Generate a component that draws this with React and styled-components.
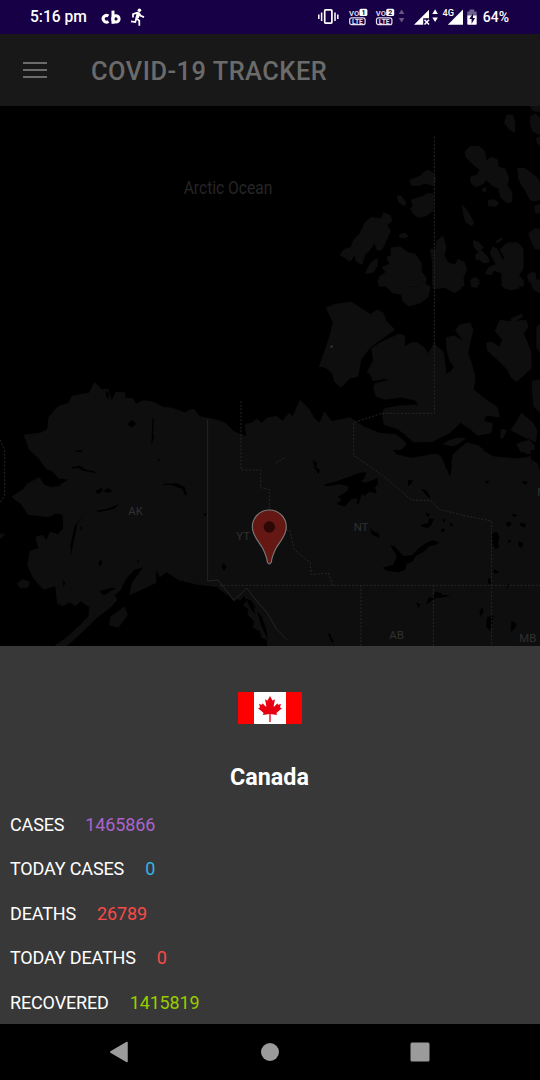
import React from "react";
import styled, { createGlobalStyle } from "styled-components";

const GlobalStyle = createGlobalStyle`
  * { box-sizing: border-box; }
  body { margin: 0; background: #000; font-family: Roboto, "Liberation Sans", sans-serif; }
`;

const Screen = styled.div`
  width: 540px;
  height: 1080px;
  display: flex;
  flex-direction: column;
  overflow: hidden;
  background: #000;
`;

const StatusBar = styled.header`
  flex: none;
  height: 34px;
  padding: 0 31px 0 30px;
  display: flex;
  align-items: center;
  justify-content: space-between;
  background: #170045;
  color: #fff;
`;

const StatusGroup = styled.div`
  display: flex;
  align-items: center;
  gap: ${(p) => p.$gap}px;
  height: 34px;
`;

const StatusText = styled.span`
  font-size: ${(p) => p.$size}px;
  font-weight: 500;
  line-height: 34px;
  white-space: nowrap;
`;

const StatusIcons = styled.svg`
  display: block;
  flex: none;
`;

const AppBar = styled.div`
  flex: none;
  height: 72px;
  padding: 0 23px;
  display: flex;
  align-items: center;
  gap: 44px;
  background: #181818;
  color: #6b6b6b;
`;

const Burger = styled.div`
  width: 24px;
  height: 16px;
  display: flex;
  flex-direction: column;
  justify-content: space-between;
`;

const BurgerLine = styled.span`
  height: 2px;
  background: #6b6b6b;
`;

const Title = styled.h1`
  margin: 1px 0 0;
  font-size: 25.4px;
  font-weight: 500;
  line-height: 30px;
  letter-spacing: 0.5px;
  white-space: nowrap;
`;

const MapSvg = styled.svg`
  display: block;
  flex: none;
  width: 540px;
  height: 540px;
  font-family: Roboto, sans-serif;
`;

const Sheet = styled.section`
  flex: none;
  height: 378px;
  padding-top: 46px;
  display: flex;
  flex-direction: column;
  background: #383838;
  color: #fff;
`;

const Flag = styled.svg`
  display: block;
  flex: none;
  align-self: center;
`;

const Country = styled.h2`
  margin: 39px 0 0;
  font-size: 23.3px;
  line-height: 28px;
  font-weight: 700;
  text-align: center;
  padding-right: 1px;
`;

const Stats = styled.dl`
  margin: 11px 0 0;
  padding: 0 10px;
`;

const StatRow = styled.div`
  height: 44.5px;
  display: flex;
  align-items: center;
  gap: 21px;
  font-size: 18px;
  letter-spacing: -0.15px;
`;

const StatLabel = styled.dt`
  white-space: nowrap;
`;

const StatValue = styled.dd`
  margin: 0;
  color: ${(p) => p.$color};
`;

const NavBar = styled.nav`
  flex: none;
  height: 56px;
  padding: 0 110px 0 109px;
  display: flex;
  align-items: center;
  justify-content: space-between;
  background: #000;
`;

const Water = styled.g`
  fill: #000;
  stroke: none;
`;

const Border = styled.path`
  fill: none;
  stroke: ${(p) => (p.$solid ? "#242424" : "#272727")};
  stroke-width: 3;
  stroke-dasharray: ${(p) => (p.$solid ? "none" : "6 5")};
`;

const Place = styled.text`
  fill: ${(p) => p.$color || "#303030"};
  font-size: ${(p) => p.$size || 34}px;
`;

const stats = [
  { label: "CASES", value: "1465866", color: "#a964cd" },
  { label: "TODAY CASES", value: "0", color: "#33b5e5" },
  { label: "DEATHS", value: "26789", color: "#fa4949" },
  { label: "TODAY DEATHS", value: "0", color: "#fa4949" },
  { label: "RECOVERED", value: "1415819", color: "#99cc00" },
];

function LeftIcons() {
  return (
    <StatusIcons width="46" height="34" viewBox="100 0 46 34">
      <g fill="none" stroke="#fff" strokeWidth="3">
        <path d="M108.4 16.1A3.3 3.3 0 1 0 108.4 21.5" />
        <path d="M113 10.6V23.8" />
        <circle cx="115.9" cy="18.9" r="3.2" />
      </g>
      <circle cx="139.4" cy="10.3" r="1.8" fill="#fff" />
      <path
        d="M133 17.5V14.2L137.2 12.7L139.1 13.3L140.7 15.7L144 17.1M137.6 13L136.2 18.2L139.3 20.7V25.7M136.3 18.5L135.3 22.1L131 21.4M139.2 14L138 18"
        fill="none"
        stroke="#fff"
        strokeWidth="1.75"
      />
    </StatusIcons>
  );
}

function VolteIcon({ x, sim }) {
  return (
    <g transform={`translate(${x} 0)`}>
      <text x="0" y="16.1" fontSize="8" fontWeight="700" fill="#ddd6e8" textLength="10.2" lengthAdjust="spacingAndGlyphs">VO</text>
      <rect x="10.4" y="8.8" width="8" height="7.3" rx="1.6" fill="#fff" />
      <text x="12.5" y="15.2" fontSize="7" fontWeight="700" fill="#170045">{sim}</text>
      <rect x="0.7" y="17.8" width="15.4" height="6.9" rx="2" fill="none" stroke="#e6e0ee" strokeWidth="1.2" />
      <text x="3" y="23.8" fontSize="6.4" fontWeight="700" fill="#e6e0ee" textLength="10.8" lengthAdjust="spacingAndGlyphs">LTE</text>
    </g>
  );
}

function RightIcons() {
  return (
    <StatusIcons width="165" height="34" viewBox="316 0 165 34" fontFamily="Roboto, sans-serif">
      <rect x="324.7" y="9.9" width="7.2" height="13.2" rx="0.8" fill="none" stroke="#fff" strokeWidth="1.7" />
      <path d="M321.6 12.5V21M318.8 14.5V19M335 12.5V21M337.8 14.5V19" stroke="#fff" strokeWidth="1.5" />
      <VolteIcon x={349} sim="1" />
      <VolteIcon x={375.8} sim="2" />
      <path d="M398.8 14L401.6 9.5L404.4 14ZM398.8 18L401.6 22.5L404.4 18Z" fill="#675982" />
      <path d="M414 24.8L429 9.7V18.2H423.2V24.8Z" fill="#fff" />
      <path d="M424.5 19.7L429 24.4M429 19.7L424.5 24.4" stroke="#fff" strokeWidth="1.5" />
      <path d="M432.3 14L435.1 9.3L437.9 14ZM432.3 17.4L435.1 22L437.9 17.4Z" fill="#fff" />
      <text x="442.5" y="15.5" fontSize="9.8" fontWeight="500" fill="#fff" textLength="11.5" lengthAdjust="spacingAndGlyphs">4G</text>
      <path d="M447.8 24.8L463 9.6V24.8Z" fill="#fff" />
      <path d="M467.3 16V11.5H469.5V9.6H474.3V11.5H476.7V16Z" fill="#6e608c" />
      <path d="M467.3 15.5H476.7V24Q476.7 24.8 475.9 24.8H468.1Q467.3 24.8 467.3 24Z" fill="#fff" />
      <path d="M473.2 13.2L469.3 19.1H471.6V23.7L475.1 17.9H472.9Z" fill="#170045" />
    </StatusIcons>
  );
}

function ArcticIslands() {
  return (
    <>
      <g transform="translate(900 0)">
        <path d="M620 28L638 27L645 52L643 79L628 70L614 52ZM690 0H720V18L698 13ZM692 32L707 24L720 36V85L700 78L691 55ZM710 96L720 92V120L712 111Z" />
        <path d="M495 137L510 122L535 121L553 134L559 165L575 154L592 161L595 183L614 188L626 216L621 239L635 258L636 287L622 290L603 276L596 247L576 238L559 221L548 235L525 242L512 228L513 211L531 209L540 191L523 178L498 153ZM653 186L675 188L710 213L720 228V280L705 285L690 281L677 254L663 235L656 216ZM548 247L558 246L557 257L549 256ZM564 284L583 281L596 290L588 301L566 299Z" />
        <path d="M330 222L360 211L379 193L398 199L408 219L401 239L375 231L354 239L334 237ZM334 282L368 272L381 263L401 264V313L379 329L355 334L340 323L332 307L340 300ZM291 269L303 270L318 290L313 299L297 289ZM298 386L316 382L324 390L314 396L300 394Z" />
        <path d="M121 446L132 431L153 424L162 401L180 382L197 348L213 335L246 338L251 320L271 329L275 345L261 357L271 376L262 396L245 432H231L224 408L205 438L195 442L186 475L168 465L165 446L150 466ZM213 470L231 458L232 479L218 500L196 501ZM487 298L501 313L522 352L514 359L497 347L491 323Z" />
        <path d="M273 426L300 423L325 440L346 445L364 472V498L379 516L374 540H236L238 512L259 498L246 484L269 475L261 454L274 448ZM410 405L429 391L438 425L432 449L445 471L466 477L474 460L492 468L500 490L489 518L492 540H398V470L391 430L408 432ZM520 404L535 408L550 425L542 432L562 451L568 468L548 470L540 461L530 462L526 447L538 441L523 424ZM578 423L592 430L609 464L615 455L600 430L623 411L654 410L669 428V488L656 508L670 523V540H606V502L582 492L575 506L556 503L568 483L588 476L571 442ZM704 301L720 295V321H706ZM686 383L704 367L720 370V430L704 428ZM516 518L528 514L539 532L531 540H516ZM682 508L696 499L707 502L706 524L689 530ZM589 405L606 395L604 402L591 411Z" />
      </g>
      <g transform="translate(900 522)">
        <path d="M234 0H314L317 20L350 22L371 11L391 20L383 52L359 69L327 78L309 64L305 43L279 38L252 14L238 17ZM398 0H490L481 28L462 38L435 22L400 27ZM512 0H537L531 22L515 20ZM607 0H664L655 25L635 30L612 24ZM692 0H720V40L700 28Z" />
        <path d="M79 83L103 74L154 66L184 86L211 103L231 90L249 98L257 121L283 149L249 174L212 200L183 237L173 289L149 295L122 322L104 305L98 280L76 262L58 259L73 219L89 171L100 128Z" />
        <path d="M215 205L246 186L298 162L314 168L313 202L330 190L348 187L370 201L386 221L402 191L430 217L438 282L452 276L463 260L450 244L441 208L439 173L462 168L491 184L467 151L477 136L510 128L519 150L510 185L503 220L515 252L525 293L520 328L547 351L591 382L598 411L558 405L550 424L577 430L573 458L532 466L512 448L482 427L448 459L398 484L340 486L315 463L294 447L253 433L247 402L253 386L297 378L358 375L345 360L306 351L257 358L230 350L221 327L225 311L276 298L250 296L220 302L210 279L202 277L221 240Z" />
        <path d="M586 153L600 121L632 125L678 121L684 140L670 160L685 197L693 218L693 266L669 287L649 305L633 291L623 269L601 246L562 211L560 188L577 187L598 202L608 180ZM633 117L665 102L667 110L638 126ZM633 450L651 425L664 400L696 426L711 451L707 485L675 472ZM696 304L720 299V398L701 379ZM711 140L720 133V216L711 205ZM604 448L619 451L608 475L602 472ZM651 492L687 481L704 497L699 522L664 519ZM431 492L447 482L475 474L496 475L478 489L460 498Z" />
      </g>
    </>
  );
}

function Mainland() {
  return (
    <g transform="translate(0 792)">
      <path d="M165 828L206 798L238 769L267 738L269 711L241 692L228 707L207 695L188 707L173 700L167 647L130 658L98 620L83 584L90 544L116 535L108 502L127 496L139 512L151 487L174 494L191 475L189 433L168 429L145 440L85 433L64 402L36 381L70 358L83 341L118 323L131 344L150 352L179 350L187 337L209 330L179 327L157 303L140 296L115 263L88 238L73 195L120 190L143 179L147 141L174 110L207 99L216 79L268 69L284 38L306 60L323 57L335 93L348 67L374 68L375 84L398 86L408 102L432 92L461 97L488 111L521 116L553 128L581 117L599 140L650 150L675 159L702 186L741 201L735 164L756 159L770 147L785 160L800 145L830 139L847 154L868 130L878 142L900 91L928 119L943 146L960 160L973 127L995 155L1050 143L1090 170L1140 190L1190 195L1218 220L1213 230L1190 249L1249 258L1320 252L1340 303L1354 280L1360 253L1400 218L1434 228L1482 260L1552 267L1620 255V828H800L767 783L744 741L713 710L683 676L652 650L594 643L535 629L500 605L480 620L468 596L467 638L420 660L389 674L397 640L431 590L403 598L376 628L361 660L343 675L350 690L332 711L293 740L262 771L232 799L199 828Z" />
      <path d="M51 641L67 629L89 636L83 652L62 654ZM332 741L373 711L382 734L355 772L329 765ZM0 492L15 493L0 506Z" />
      <Water>
        <path d="M386 158L398 150L408 162L397 172L386 168ZM458 140L462 148L459 188L462 202L454 228ZM215 292L239 287L257 299L281 303L290 311L269 305L251 303L235 293L216 296ZM180 325L202 329L186 342ZM252 431L232 462L213 555L211 526L224 469ZM286 422L322 416L357 402L343 416L300 426ZM299 664L333 653L347 655L312 676ZM285 363L306 354L307 364L326 355L337 364L322 368L309 362L294 373ZM489 341L531 340L554 351L561 377L554 374L547 357L514 345L489 344ZM664 590L671 580L680 592L672 602ZM610 430H620L615 441Z" />
        <path d="M318 62L327 70L325 90L318 78ZM240 470L247 474L243 482ZM298 570L307 575L300 590L296 584ZM188 630L196 640L190 652ZM474 265L480 270L474 276ZM412 570L418 574L413 579ZM225 242L248 240L246 245L227 246Z" />
        <path d="M676 666L700 692L711 686L720 692L732 678L740 693L729 706L746 718L742 733L762 754L759 773L778 783L786 804L801 810V828H768L748 778L705 710ZM738 686L753 691L770 717L762 710L765 734L751 714ZM771 724L786 742L799 780L805 811L783 766Z" />
      </Water>
    </g>
  );
}

function Lakes() {
  return (
    <Water transform="translate(810 1032)">
      <path d="M161 104L200 94L233 82L270 68L289 67L282 87L272 93L285 98L322 85L324 102L315 111L320 130L297 125L284 137L275 131L266 162L259 161L264 144L245 147L224 170L200 162L214 149L204 140L231 124L237 109L207 103L171 109Z" />
      <path d="M337 353L370 344L380 318L360 284L375 290L400 318L427 316L444 296L469 278L489 271L508 278L497 284L478 289L463 304L437 318L428 335L410 341L406 359L386 367L350 362ZM469 463L475 444L490 441L495 426L513 428L516 435L542 436L514 443L500 443ZM438 458L451 462L446 474Z" />
      <path d="M300 235L313 246L324 248L330 264L306 254ZM128 31L142 40L138 52L151 60L145 73L134 55ZM414 90L429 91L425 100L414 109ZM453 116L469 121L483 145L472 140ZM466 190L480 191L473 203ZM478 205L491 207L484 225L475 233L456 231L453 224L474 220ZM517 206L527 210L520 219ZM540 218L550 222L542 232ZM513 236H524L523 246H514ZM666 249L682 246L688 262L684 278L688 292L677 297L667 281ZM645 91L659 95L649 101ZM757 93L772 94L771 104L758 100ZM722 190L743 196L733 202ZM707 221L718 213L725 223L714 232ZM750 218L768 221L765 233L751 227ZM715 268L725 273L715 280ZM746 273L760 280L755 294L745 288ZM637 470L641 487L633 499L628 486ZM657 380L665 398L658 405L653 393ZM670 356L689 366L673 371ZM710 399L718 406L711 417ZM651 502L671 496L666 525L659 542L648 529ZM724 512L740 521L733 536L722 545ZM179 550L193 579L184 575L174 553Z" />
      <path d="M370 0H487L471 16L422 23L379 13ZM493 0H544L534 18L546 45L540 82L533 63L530 40L507 14ZM636 0H742L746 10L711 18L671 19ZM755 5L767 9L762 25L751 18ZM782 0H810V60L801 38L783 28Z" />
    </Water>
  );
}

function TrackerMap() {
  return (
    <MapSvg viewBox="0 0 1620 1620">
      <rect width="1620" height="1620" fill="#000" />
      <g fill="#0e0e0e" stroke="#0e0e0e" strokeWidth="3" strokeLinejoin="round">
        <ArcticIslands />
        <Mainland />
      </g>
      <Lakes />
      <Border d="M1303 92V922H1145L1061 950V1048L1120 1088L1172 1128L1235 1182L1292 1184L1318 1210L1402 1231L1475 1245V1620M723 885V1092H782V1145L808 1151V1245L870 1275L882 1330L930 1370L934 1406L985 1401L998 1437M660 1438H1620M1083 1438V1620M1300 1438V1620M0 1002L14 1030V1170L0 1190M828 1070L857 1054" />
      <Border $solid d="M623 940V1425L655 1422L663 1432L702 1484L740 1446L770 1485L800 1518L830 1570L862 1602" />
      <Place x="551" y="264" $size="54" $color="#262626" textLength="266" lengthAdjust="spacingAndGlyphs">Arctic Ocean</Place>
      <Place x="385" y="1227">AK</Place>
      <Place x="709" y="1303">YT</Place>
      <Place x="1061" y="1276">NT</Place>
      <Place x="1168" y="1599">AB</Place>
      <Place x="1558" y="1609">MB</Place>
      <Place x="1612" y="1171">N</Place>
      <g>
        <path
          d="M808 1212C779 1212 757 1235 757 1263C757 1289 776 1305 788 1327C797 1345 801 1357 802 1368Q808 1380 814 1368C815 1357 819 1345 828 1327C840 1305 859 1289 859 1263C859 1235 837 1212 808 1212Z"
          fill="#651713"
          stroke="#777"
          strokeWidth="3.5"
        />
        <circle cx="808" cy="1263" r="17" fill="#2b0706" />
      </g>
      <circle cx="995" cy="722" r="4" fill="#303030" />
    </MapSvg>
  );
}

function CanadaFlag() {
  return (
    <Flag width="64" height="32" viewBox="0 0 192 96" aria-label="Flag of Canada">
      <path d="M0 0H192V96H0Z" fill="#f00" />
      <path d="M48 0H144V96H48Z" fill="#fff" />
      <path
        d="M96 12L89 25Q88 26 86 25L81 22L85 42Q85 45 82 43L74 34L72 38L63 36L66 45Q66 47 64 47L60 49L76 62Q77 63 76 65L75 69L94 66L94 90H98L98 66L117 69L116 65Q115 63 116 62L132 49L128 47Q126 47 126 45L129 36L120 38L118 34L110 43Q107 45 107 42L111 22L106 25Q103 26 103 25Z"
        fill="#e60012"
      />
    </Flag>
  );
}

export default function App() {
  return (
    <>
      <GlobalStyle />
      <Screen>
        <StatusBar>
          <StatusGroup $gap={13}>
            <StatusText $size={15.6}>5:16 pm</StatusText>
            <LeftIcons />
          </StatusGroup>
          <StatusGroup $gap={2}>
            <RightIcons />
            <StatusText $size={14}>64%</StatusText>
          </StatusGroup>
        </StatusBar>
        <AppBar>
          <Burger>
            <BurgerLine />
            <BurgerLine />
            <BurgerLine />
          </Burger>
          <Title>COVID-19 TRACKER</Title>
        </AppBar>
        <TrackerMap />
        <Sheet>
          <CanadaFlag />
          <Country>Canada</Country>
          <Stats>
            {stats.map((s) => (
              <StatRow key={s.label}>
                <StatLabel>{s.label}</StatLabel>
                <StatValue $color={s.color}>{s.value}</StatValue>
              </StatRow>
            ))}
          </Stats>
        </Sheet>
        <NavBar>
          <svg width="20" height="22" viewBox="0 0 20 22">
            <path d="M18 1.5V20.5L1.8 11Z" fill="#9b9b9b" stroke="#9b9b9b" strokeWidth="1.5" strokeLinejoin="round" />
          </svg>
          <svg width="20" height="20" viewBox="0 0 20 20">
            <circle cx="10" cy="10" r="9" fill="#9b9b9b" />
          </svg>
          <svg width="20" height="20" viewBox="0 0 20 20">
            <rect x="0.5" y="0.5" width="19" height="19" rx="1.5" fill="#9b9b9b" />
          </svg>
        </NavBar>
      </Screen>
    </>
  );
}
